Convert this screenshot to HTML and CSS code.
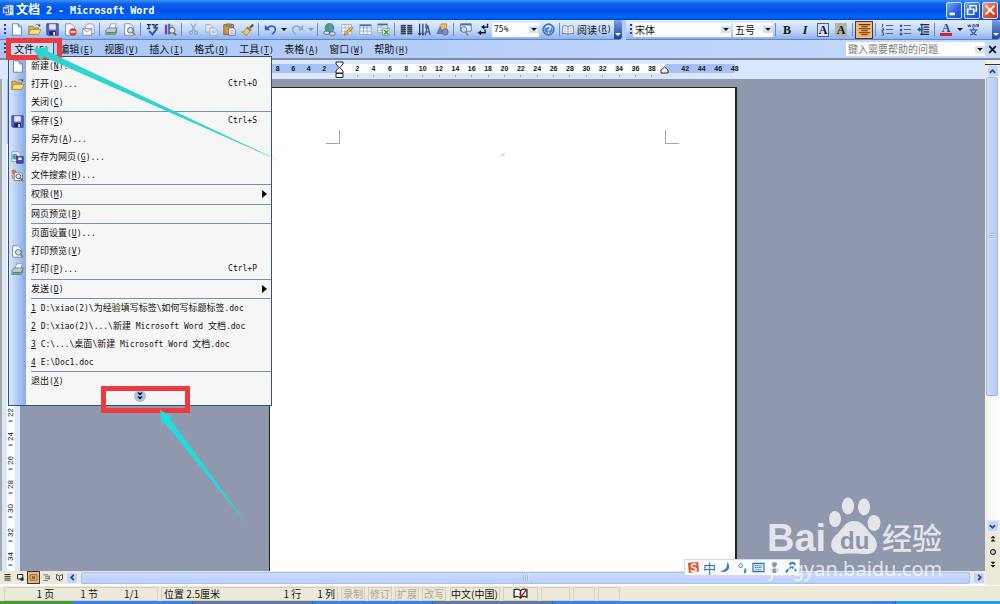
FILE: index.html
```html
<!DOCTYPE html>
<html lang="zh-CN">
<head>
<meta charset="utf-8">
<title>文档 2 - Microsoft Word</title>
<link rel="stylesheet" href="styles.css">
</head>
<body>
<svg class="defs" aria-hidden="true">
  <defs>
    <symbol id="i-new" viewBox="0 0 16 16"><path d="M3 1h7l4 4v10H3z" fill="#fff" stroke="#5a6a94"/><path d="M10 1v4h4z" fill="#b9c9ea" stroke="#5a6a94" stroke-width=".7"/></symbol>
    <symbol id="i-open" viewBox="0 0 16 16"><path d="M1 4h5l1 2h6v8H1z" fill="#e9b13c" stroke="#8a6416" stroke-width=".8"/><path d="M3 8h13l-3 6H1z" fill="#ffdf80" stroke="#9c741c" stroke-width=".8"/><path d="M9 3c2-2 4-2 5 1" fill="none" stroke="#555"/><path d="M12 3l3 2V1z" fill="#555"/></symbol>
    <symbol id="i-save" viewBox="0 0 16 16"><path d="M1 1h14v14H2l-1-1z" fill="#5a62c8" stroke="#2e358c"/><path d="M4 1.500h8V8H4z" fill="#e6ebfb"/><path d="M4 10h8v5H4z" fill="#1e246b"/><path d="M9 11h2v4H9z" fill="#fff"/></symbol>
    <symbol id="i-perm" viewBox="0 0 16 16"><path d="M2 1h7l4 4v10H2z" fill="#fff" stroke="#6b7794"/><circle cx="11" cy="11" r="4.500" fill="#d8402c"/><path d="M8 10h6v2H8z" fill="#fff"/></symbol>
    <symbol id="i-mail" viewBox="0 0 16 16"><path d="M4 7V4l3-3h6l2 3v9h-3" fill="#f4f6fb" stroke="#8790a8"/><path d="M1 7h11v8H1z" fill="#fff" stroke="#6f7892"/><path d="M1 7l5.500 4L12 7" fill="none" stroke="#6f7892"/></symbol>
    <symbol id="i-print" viewBox="0 0 16 16"><path d="M5 7l2-6h7l-2 6z" fill="#fff" stroke="#6b7794" stroke-width=".8"/><path d="M1 9l3-3h11l-2 4v4H1z" fill="#c5cad2" stroke="#515966" stroke-width=".8"/><path d="M2 11h10v2H2z" fill="#2f9e48"/><path d="M13 10l2-3v4l-2 3z" fill="#7a828f"/></symbol>
    <symbol id="i-preview" viewBox="0 0 16 16"><path d="M2 1h7l4 4v10H2z" fill="#fff" stroke="#6b7794"/><circle cx="9" cy="9" r="3.500" fill="#c9e2f8" stroke="#444f66"/><path d="M11.500 11.500L15 15" stroke="#b47a38" stroke-width="2"/></symbol>
    <symbol id="i-spell" viewBox="0 0 16 16"><path d="M1 2h5M3.500 2v5M7 2h3v5M12 2h3M12 2v4h3M1 7h4" fill="none" stroke="#222c4e" stroke-width="1.500"/><path d="M4 10l4 4 6-8" fill="none" stroke="#2559c4" stroke-width="2.500"/></symbol>
    <symbol id="i-research" viewBox="0 0 16 16"><path d="M1 2h3v12H1z" fill="#8d3e95"/><path d="M5 1h3v13H5z" fill="#4670be"/><path d="M9 2h3v12H9z" fill="#ddb13a"/><circle cx="10" cy="9" r="3.500" fill="#d9ebfb" stroke="#3f4b6a"/><path d="M12 12l3 3" stroke="#84571f" stroke-width="2"/></symbol>
    <symbol id="i-cut" viewBox="0 0 16 16"><path d="M5 1l5 9M11 1L6 10" stroke="#93a2c0" stroke-width="1.500"/><circle cx="5" cy="12" r="2" fill="none" stroke="#93a2c0" stroke-width="1.500"/><circle cx="11" cy="12" r="2" fill="none" stroke="#93a2c0" stroke-width="1.500"/></symbol>
    <symbol id="i-copy" viewBox="0 0 16 16"><path d="M1 2h6l2 2v7H1z" fill="#e4eaf5" stroke="#97a5c1"/><path d="M6 6h6l3 3v6H6z" fill="#e4eaf5" stroke="#97a5c1"/><path d="M8 10h5M8 12h5" stroke="#97a5c1"/></symbol>
    <symbol id="i-paste" viewBox="0 0 16 16"><path d="M1 2h12v12H1z" fill="#d99a30" stroke="#7a5313"/><path d="M4 1h6v3H4z" fill="#8f98a8" stroke="#555" stroke-width=".6"/><path d="M7 6h6l2 2v7H7z" fill="#fff" stroke="#445c98"/><path d="M9 9h4M9 11h4M9 13h4" stroke="#6881ba" stroke-width=".8"/></symbol>
    <symbol id="i-brush" viewBox="0 0 16 16"><path d="M10 5l4-4 2 2-4 4z" fill="#785023"/><path d="M8 4l5 5-2 1-4-4z" fill="#6f7b93"/><path d="M7 6l4 4-4 5-6-4c3 0 4-2 6-5z" fill="#f4cf4d" stroke="#8d6b17" stroke-width=".8"/></symbol>
    <symbol id="i-undo" viewBox="0 0 16 16"><path d="M4 6c5-4 10-2 10 2 0 3-2 4-4 6" fill="none" stroke="currentColor" stroke-width="2"/><path d="M1 2v7h7z" fill="currentColor"/></symbol>
    <symbol id="i-redo" viewBox="0 0 16 16"><path d="M12 6C7 2 2 4 2 8c0 3 2 4 4 6" fill="none" stroke="currentColor" stroke-width="2"/><path d="M15 2v7H8z" fill="currentColor"/></symbol>
    <symbol id="i-link" viewBox="0 0 16 16"><circle cx="8" cy="6" r="5.500" fill="#4f94d6" stroke="#2a5a8c" stroke-width=".7"/><path d="M4 3c3-3 5-1 4 1s3 3 0 6c-2 0-2-3-4-3zM10 3l3 2-2 3z" fill="#4aa650"/><rect x="1" y="10" width="7" height="4" rx="2" fill="#dde3ea" stroke="#4a5364"/><rect x="8" y="11" width="7" height="4" rx="2" fill="#dde3ea" stroke="#4a5364"/></symbol>
    <symbol id="i-tabdraw" viewBox="0 0 16 16"><path d="M1 2h12v12H1zM1 6h12M1 10h12M5 2v12M9 2v12" fill="#fff" stroke="#8796b7" stroke-width=".8"/><path d="M5 12l8-8 2 2-8 8-3 1z" fill="#f0b73a" stroke="#784c1c" stroke-width=".7"/></symbol>
    <symbol id="i-table" viewBox="0 0 16 16"><path d="M1 2h14v12H1zM1 6h14M1 10h14M5.500 2v12M10 2v12" fill="#fff" stroke="#6e8fc4" stroke-width=".8"/><path d="M1 2h14v2H1z" fill="#3c68b4"/></symbol>
    <symbol id="i-excel" viewBox="0 0 16 16"><path d="M1 1h12v11H1zM1 5h12M1 9h12M5 1v11" fill="#fff" stroke="#6e8fc4" stroke-width=".8"/><path d="M1 1h12v2H1z" fill="#3c68b4"/><path d="M7 7h9v8H7z" fill="#e8f6e4" stroke="#38803a" stroke-width=".8"/><path d="M9 9l5 5M14 9l-5 5" stroke="#2f8e35" stroke-width="1.700"/></symbol>
    <symbol id="i-cols" viewBox="0 0 16 16"><path d="M1 2h6v12H1zM9 2h6v12H9z" fill="#6b7080"/><path d="M1 3h6M1 5.500h6M1 8h6M1 10.500h6M1 13h6M9 3h6M9 5.500h6M9 8h6M9 10.500h6M9 13h6" stroke="#333b50" stroke-width="1.300"/></symbol>
    <symbol id="i-dir" viewBox="0 0 16 16"><path d="M2 1v14M6 1v14M10 1v6" stroke="#2c3650" stroke-width="1.500"/><path d="M0 12l2 3 2-3M4 12l2 3 2-3" fill="none" stroke="#2c3650"/><path d="M9 15l3-12 3 12M10 11h4" fill="none" stroke="#31549f" stroke-width="1.500"/></symbol>
    <symbol id="i-draw" viewBox="0 0 16 16"><path d="M5 3l2-2h6v6l-2 2H5z" fill="#e8c258" stroke="#8a6820" stroke-width=".7"/><path d="M1 13l4-8 4 8z" fill="#6c82c8" stroke="#38478c" stroke-width=".7"/><ellipse cx="11.500" cy="11" rx="3.500" ry="4" fill="#8f87c8" stroke="#4b4484" stroke-width=".7"/></symbol>
    <symbol id="i-map" viewBox="0 0 16 16"><path d="M2 1h13v9H2z" fill="#e7f1fd" stroke="#4468a8"/><path d="M2 1h13v2H2z" fill="#4772bd"/><circle cx="6" cy="8" r="3.500" fill="#c7e8ef" stroke="#3f6b78"/><path d="M8 11l3 4" stroke="#a97632" stroke-width="2"/></symbol>
    <symbol id="i-marks" viewBox="0 0 16 16"><path d="M13 1v4H7M10 8v4H4" fill="none" stroke="#111" stroke-width="1.600"/><path d="M5 5l4-3v6zM1 12l4-3v6z" fill="#111"/></symbol>
    <symbol id="i-help" viewBox="0 0 16 16"><circle cx="8" cy="8" r="7" fill="#4d84d6" stroke="#2b559c"/><circle cx="8" cy="8" r="5" fill="none" stroke="#b9d3f7" stroke-width=".7"/><path d="M5.500 6c0-3 5-3 5 0 0 2-2.500 1.500-2.500 4M8 11.500v1.500" fill="none" stroke="#fff" stroke-width="1.600"/></symbol>
    <symbol id="i-book" viewBox="0 0 16 16"><path d="M8 4C6 2 3 2 1 3v10c2-1 5-1 7 1 2-2 5-2 7-1V3c-2-1-5-1-7 1zM8 4v10" fill="#fff" stroke="#525f7c"/><path d="M3 6h3M3 8h3M3 10h3M10 6h3M10 8h3M10 10h3" stroke="#8d99b4" stroke-width=".8"/></symbol>
    <symbol id="i-center" viewBox="0 0 16 16"><path d="M1 2h14M4 4.500h8M1 7h14M4 9.500h8M1 12h14M4 14.500h8" stroke="#4a3520" stroke-width="1.300"/></symbol>
    <symbol id="i-num" viewBox="0 0 16 16"><path d="M2 1v4M1 7h2v2H1v1h2M1 12h2v3H1" fill="none" stroke="#2b4f9d" stroke-width="1.200"/><path d="M6 3h9M6 8h9M6 13h9" stroke="#5d6678" stroke-width="1.300"/></symbol>
    <symbol id="i-bul" viewBox="0 0 16 16"><path d="M1 2h3v3H1zM1 7h3v3H1zM1 12h3v3H1z" fill="#31559f"/><path d="M6 3h9M6 8h9M6 13h9" stroke="#5d6678" stroke-width="1.300"/></symbol>
    <symbol id="i-indent" viewBox="0 0 16 16"><path d="M4 2h11M8 5h7M8 8h7M8 11h7M4 14h11M6 1v14" stroke="#222b40" stroke-width="1.400"/><path d="M0 8l4-3v6z" fill="#2750a7"/><path d="M3 8h5" stroke="#2750a7" stroke-width="2"/></symbol>
    <symbol id="i-pinyin" viewBox="0 0 16 16"><path d="M1 2l1 3 1-3 1 3 1-3M7 2h2v3H7V3M11 5V2h2v3M14 1v4" fill="none" stroke="#2e3b5c"/><path d="M8 6v2M3 8.500h10M5 9c1 3 4 5 7 6M11 9c-1 3-4 5-7 6" fill="none" stroke="#2f5cb0" stroke-width="1.500"/></symbol>
    <symbol id="i-websave" viewBox="0 0 16 16"><path d="M1 1h8l2 2v10H1z" fill="#fff" stroke="#7787a8"/><circle cx="5" cy="7" r="3.500" fill="#4b9ccb"/><path d="M3 6l3-1v4z" fill="#5bb35a"/><path d="M7 7h8v8H7z" fill="#4850b0" stroke="#272d78"/><path d="M9 8h4v3H9z" fill="#fff"/></symbol>
    <symbol id="i-search" viewBox="0 0 16 16"><path d="M1 1h5v5H1z" fill="#e07632"/><path d="M4 4h7l3 3v7H4z" fill="#fff" stroke="#5a6a94"/><path d="M1 8h2M2 7v5" stroke="#c69b2a" stroke-width="2"/><circle cx="9" cy="9" r="3" fill="#cfe4f6" stroke="#3f4d70"/><path d="M11 11l4 4" stroke="#a8682c" stroke-width="2"/></symbol>
    <symbol id="i-left" viewBox="0 0 10 10"><path d="M6.500 2L3.500 5l3 3" fill="none" stroke="#2b4687" stroke-width="2"/></symbol>
    <symbol id="i-right" viewBox="0 0 10 10"><path d="M3.500 2l3 3-3 3" fill="none" stroke="#2b4687" stroke-width="2"/></symbol>
    <symbol id="i-up" viewBox="0 0 10 10"><path d="M2 6.500l3-3 3 3" fill="none" stroke="#2b4687" stroke-width="2"/></symbol>
    <symbol id="i-down" viewBox="0 0 10 10"><path d="M2 3.500l3 3 3-3" fill="none" stroke="#2b4687" stroke-width="2"/></symbol>
  </defs>
</svg>

<header class="titlebar">
  <svg class="app-icon" viewBox="0 0 16 16"><path d="M5 1h10v13H5z" fill="#fff" stroke="#91a7d6"/><path d="M8 4h6M8 6h6M10 8h4M10 10h4" stroke="#7b93c4"/><path d="M1 3h9v9H1z" fill="#dfe8fb" stroke="#3a5fb0"/><path d="M3 5l1 5 1.500-4L7 10l1-5" fill="none" stroke="#2450a8" stroke-width="1.400"/></svg>
  <h1 class="title">文档<span class="latin-title"> 2 - Microsoft Word</span></h1>
  <button class="win" aria-label="最小化"><svg viewBox="0 0 16 16"><path d="M3 11h6v3H3z" fill="#fff"/></svg></button>
  <button class="win" aria-label="还原"><svg viewBox="0 0 16 16"><path d="M6 6V3h7v6h-3M3 7h7v6H3z" fill="none" stroke="#fff" stroke-width="1.700"/></svg></button>
  <button class="win close" aria-label="关闭"><svg viewBox="0 0 16 16"><path d="M3 3l10 10M13 3L3 13" stroke="#fff" stroke-width="2.400"/></svg></button>
</header>

<div class="toolbars">
  <div class="toolbar standard" role="toolbar" aria-label="常用">
    <span class="grip"></span>
    <button class="tool" aria-label="新建"><svg><use href="#i-new"/></svg></button>
    <button class="tool" aria-label="打开"><svg><use href="#i-open"/></svg></button>
    <button class="tool" aria-label="保存"><svg><use href="#i-save"/></svg></button>
    <button class="tool" aria-label="权限"><svg><use href="#i-perm"/></svg></button>
    <button class="tool" aria-label="电子邮件"><svg><use href="#i-mail"/></svg></button>
    <span class="sep"></span>
    <button class="tool" aria-label="打印"><svg><use href="#i-print"/></svg></button>
    <button class="tool" aria-label="打印预览"><svg><use href="#i-preview"/></svg></button>
    <span class="sep"></span>
    <button class="tool" aria-label="拼写"><svg><use href="#i-spell"/></svg></button>
    <button class="tool" aria-label="信息检索"><svg><use href="#i-research"/></svg></button>
    <span class="sep"></span>
    <button class="tool" aria-label="剪切"><svg><use href="#i-cut"/></svg></button>
    <button class="tool" aria-label="复制"><svg><use href="#i-copy"/></svg></button>
    <button class="tool" aria-label="粘贴"><svg><use href="#i-paste"/></svg></button>
    <button class="tool" aria-label="格式刷"><svg><use href="#i-brush"/></svg></button>
    <span class="sep"></span>
    <button class="tool undo" aria-label="撤消"><svg><use href="#i-undo"/></svg></button>
    <button class="drop" aria-label="撤消列表"></button>
    <button class="tool redo" aria-label="恢复"><svg><use href="#i-redo"/></svg></button>
    <button class="drop dim" aria-label="恢复列表"></button>
    <span class="sep"></span>
    <button class="tool" aria-label="超链接"><svg><use href="#i-link"/></svg></button>
    <button class="tool" aria-label="表格和边框"><svg><use href="#i-tabdraw"/></svg></button>
    <button class="tool" aria-label="插入表格"><svg><use href="#i-table"/></svg></button>
    <button class="tool" aria-label="插入工作表"><svg><use href="#i-excel"/></svg></button>
    <span class="sep"></span>
    <button class="tool" aria-label="分栏"><svg><use href="#i-cols"/></svg></button>
    <button class="tool" aria-label="文字方向"><svg><use href="#i-dir"/></svg></button>
    <button class="tool" aria-label="绘图"><svg><use href="#i-draw"/></svg></button>
    <span class="sep"></span>
    <button class="tool" aria-label="文档结构图"><svg><use href="#i-map"/></svg></button>
    <button class="tool" aria-label="显示标记"><svg><use href="#i-marks"/></svg></button>
    <span class="combo zoom-box"><select class="mono" aria-label="显示比例"><option>75%</option></select></span>
    <button class="tool" aria-label="帮助"><svg><use href="#i-help"/></svg></button>
    <span class="sep"></span>
    <button class="read"><svg><use href="#i-book"/></svg>阅读<span class="mono">(<u>R</u>)</span></button>
    <button class="tail" aria-label="工具栏选项"></button>
  </div>
  <div class="toolbar format" role="toolbar" aria-label="格式">
    <span class="grip"></span>
    <span class="combo font-box"><select aria-label="字体"><option>宋体</option></select></span>
    <span class="combo size-box"><select aria-label="字号"><option>五号</option></select></span>
    <span class="sep"></span>
    <button class="tool letter">B</button>
    <button class="tool letter italic">I</button>
    <button class="tool letter"><span class="boxed">A</span></button>
    <button class="tool letter"><span class="shaded">A</span></button>
    <span class="sep"></span>
    <button class="tool pressed" aria-label="居中"><svg><use href="#i-center"/></svg></button>
    <span class="sep"></span>
    <button class="tool" aria-label="编号"><svg><use href="#i-num"/></svg></button>
    <button class="tool" aria-label="项目符号"><svg><use href="#i-bul"/></svg></button>
    <button class="tool" aria-label="减少缩进"><svg><use href="#i-indent"/></svg></button>
    <span class="sep"></span>
    <button class="tool letter color"><span class="font-color">A</span></button>
    <button class="drop" aria-label="字体颜色列表"></button>
    <button class="tool" aria-label="拼音指南"><svg><use href="#i-pinyin"/></svg></button>
    <button class="tail" aria-label="工具栏选项"></button>
  </div>
</div>

<nav class="menubar">
  <span class="grip"></span>
  <button class="menu active">文件<span class="mono">(<u>F</u>)</span></button>
  <button class="menu">编辑<span class="mono">(<u>E</u>)</span></button>
  <button class="menu">视图<span class="mono">(<u>V</u>)</span></button>
  <button class="menu">插入<span class="mono">(<u>I</u>)</span></button>
  <button class="menu">格式<span class="mono">(<u>O</u>)</span></button>
  <button class="menu">工具<span class="mono">(<u>T</u>)</span></button>
  <button class="menu">表格<span class="mono">(<u>A</u>)</span></button>
  <button class="menu">窗口<span class="mono">(<u>W</u>)</span></button>
  <button class="menu">帮助<span class="mono">(<u>H</u>)</span></button>
  <span class="ask combo"><input type="text" aria-label="帮助" placeholder="键入需要帮助的问题"></span>
  <button class="close-doc" aria-label="关闭窗口"><svg viewBox="0 0 10 10"><path d="M2 2l6 6M8 2L2 8" stroke="#111" stroke-width="1.600"/></svg></button>
</nav>

<div class="work">
  <div class="doc">
    <div class="ruler">
      <div class="scale">
        <div class="before"><span>8</span><span>6</span><span>4</span><span>2</span></div>
        <div class="inside">
          <svg class="marker hourglass" viewBox="0 0 9 18"><path d="M1 1h7v2L5 6.500 8 10v2H1v-2l3-3.500L1 3z" fill="#fff" stroke="#222"/><path d="M1 12.500h7v4H1z" fill="#fff" stroke="#222"/></svg>
          <span>2</span><span>4</span><span>6</span><span>8</span><span>10</span><span>12</span><span>14</span><span>16</span><span>18</span><span>20</span><span>22</span><span>24</span><span>26</span><span>28</span><span>30</span><span>32</span><span>34</span><span>36</span><span>38</span>
          <svg class="marker right" viewBox="0 0 9 8"><path d="M1 7V4l3.500-3L8 4v3z" fill="#fff" stroke="#222"/></svg>
        </div>
        <div class="after"><span>42</span><span>44</span><span>46</span><span>48</span></div>
      </div>
    </div>
    <div class="stage">
      <div class="vruler"><div class="vscale"><span>22</span><span>24</span><span>26</span><span>28</span><span>30</span><span>32</span><span>34</span></div></div>
      <main class="canvas">
        <article class="page">
          <div class="corners"><i class="corner"></i><i class="corner flip"></i></div>
          <div class="para">,↲</div>
        </article>
      </main>
    </div>
    <div class="hbar">
      <button class="view" aria-label="普通视图"><svg viewBox="0 0 12 12"><path d="M2 2h8M2 4.500h8M2 7h8M2 9.500h8" stroke="#222" stroke-width="1.200"/></svg></button>
      <button class="view" aria-label="Web 版式视图"><svg viewBox="0 0 12 12"><path d="M2 2h7v6H2z" fill="#fff" stroke="#222" stroke-width="1.300"/><circle cx="8" cy="8" r="2.500" fill="#333"/></svg></button>
      <button class="view on" aria-label="页面视图"><svg viewBox="0 0 12 12"><path d="M1.500 2.500h9v7h-9z" fill="#ffe0b0" stroke="#5c3a1c"/><path d="M3.500 4.500h5M3.500 6h5M3.500 7.500h5" stroke="#5c3a1c"/></svg></button>
      <button class="view" aria-label="大纲视图"><svg viewBox="0 0 12 12"><path d="M2 2.500h6M4 5h6M4 7.500h6M2 10h6M9.500 3v6" fill="none" stroke="#555"/></svg></button>
      <button class="view" aria-label="阅读版式"><svg viewBox="0 0 12 12"><path d="M6 4L2 2v6l4 2 4-2V2zM6 4v6" fill="#fff" stroke="#222"/></svg></button>
      <button class="arrow" aria-label="向左"><svg><use href="#i-left"/></svg></button>
      <div class="hthumb"><i class="knurl"></i></div>
      <button class="arrow" aria-label="向右"><svg><use href="#i-right"/></svg></button>
    </div>
  </div>
  <div class="vbar">
    <i class="split"></i>
    <button class="arrow" aria-label="向上"><svg><use href="#i-up"/></svg></button>
    <div class="vtrack"><div class="vthumb"><i class="knurl"></i></div></div>
    <button class="arrow" aria-label="向下"><svg><use href="#i-down"/></svg></button>
    <button class="browse" aria-label="前一页"><svg viewBox="0 0 10 10"><path d="M2 4l3-3 3 3zM2 8l3-3 3 3z" fill="#111"/></svg></button>
    <button class="browse" aria-label="选择浏览对象"><svg viewBox="0 0 10 10"><circle cx="5" cy="5" r="3" fill="#ccc" stroke="#222" stroke-width="1.300"/></svg></button>
    <button class="browse" aria-label="下一页"><svg viewBox="0 0 10 10"><path d="M2 1l3 3 3-3zM2 5l3 3 3-3z" fill="#111"/></svg></button>
  </div>
</div>

<footer class="status">
  <div class="cell pages"><span>1 页</span><span>1 节</span><span>1/1</span></div>
  <div class="cell pos"><span>位置 2.5厘米</span><span class="line">1 行</span><span>1 列</span></div>
  <div class="cell off">录制</div>
  <div class="cell off">修订</div>
  <div class="cell off">扩展</div>
  <div class="cell off">改写</div>
  <div class="cell lang">中文(中国)</div>
  <div class="cell book"><svg viewBox="0 0 16 12"><path d="M8 3C6 1 3 1 1 2v8c2-1 5-1 7 1 2-2 5-2 7-1V2c-2-1-5-1-7 1zM8 3v8" fill="#fff" stroke="#222" stroke-width="1.400"/><path d="M7 6l2 3 6-8" fill="none" stroke="#b3202c" stroke-width="1.600"/></svg></div>
  <div class="cell blank"></div>
  <div class="cell blank small"></div>
  <div class="cell blank small"></div>
</footer>
<div class="taskbar"><i class="start"></i><i class="task"></i><i class="task dull"></i><i class="task"></i><i class="task dull"></i><i class="task wide"></i><i class="tray"></i></div>

<div class="file-menu" role="menu">
  <button class="item"><svg><use href="#i-new"/></svg><span>新建<span class="mono">(<u>N</u>)...</span></span></button>
  <button class="item"><svg><use href="#i-open"/></svg><span>打开<span class="mono">(<u>O</u>)...</span></span><kbd>Ctrl+O</kbd></button>
  <button class="item"><span>关闭<span class="mono">(<u>C</u>)</span></span></button>
  <hr>
  <button class="item"><svg><use href="#i-save"/></svg><span>保存<span class="mono">(<u>S</u>)</span></span><kbd>Ctrl+S</kbd></button>
  <button class="item"><span>另存为<span class="mono">(<u>A</u>)...</span></span></button>
  <button class="item"><svg><use href="#i-websave"/></svg><span>另存为网页<span class="mono">(<u>G</u>)...</span></span></button>
  <button class="item"><svg><use href="#i-search"/></svg><span>文件搜索<span class="mono">(<u>H</u>)...</span></span></button>
  <hr>
  <button class="item sub"><span>权限<span class="mono">(<u>M</u>)</span></span></button>
  <hr class="roomy">
  <button class="item"><span>网页预览<span class="mono">(<u>B</u>)</span></span></button>
  <hr>
  <button class="item"><span>页面设置<span class="mono">(<u>U</u>)...</span></span></button>
  <button class="item"><svg><use href="#i-preview"/></svg><span>打印预览<span class="mono">(<u>V</u>)</span></span></button>
  <button class="item"><svg><use href="#i-print"/></svg><span>打印<span class="mono">(<u>P</u>)...</span></span><kbd>Ctrl+P</kbd></button>
  <hr class="roomy">
  <button class="item sub"><span>发送<span class="mono">(<u>D</u>)</span></span></button>
  <hr>
  <button class="item"><span><span class="mono"><u>1</u> D:\xiao(2)\</span>为经验填写标签<span class="mono">\</span>如何写标题标签<span class="mono">.doc</span></span></button>
  <button class="item"><span><span class="mono"><u>2</u> D:\xiao(2)\...\</span>新建<span class="mono"> Microsoft Word </span>文档<span class="mono">.doc</span></span></button>
  <button class="item"><span><span class="mono"><u>3</u> C:\...\</span>桌面<span class="mono">\</span>新建<span class="mono"> Microsoft Word </span>文档<span class="mono">.doc</span></span></button>
  <button class="item"><span><span class="mono"><u>4</u> E:\Doc1.doc</span></span></button>
  <hr>
  <button class="item"><span>退出<span class="mono">(<u>X</u>)</span></span></button>
  <button class="more" aria-label="展开"><svg viewBox="0 0 12 12"><circle cx="6" cy="6" r="6" fill="#a9c3ee"/><path d="M4 2.500l2 2 2-2M4 6.500l2 2 2-2" fill="none" stroke="#111" stroke-width="1.400"/></svg></button>
</div>

<div class="ime">
  <svg class="ime-logo" viewBox="0 0 14 14"><path d="M1 2l11-1 1 10-11 2z" fill="#e1572a"/><path d="M10 4C7 2.500 4 4 5 6s5 .5 5 3-4 2.500-6 1" fill="none" stroke="#fff" stroke-width="1.600"/></svg>
  <span>中</span>
  <svg viewBox="0 0 14 14"><path d="M9 1c5 6 0 13-8 10 5 0 8-4 8-10z" fill="#2b84c8"/></svg>
  <svg viewBox="0 0 14 14"><circle cx="5" cy="5" r="2" fill="none" stroke="#2b84c8"/><path d="M10 8v3l-1 2" fill="none" stroke="#2b84c8" stroke-width="2"/></svg>
  <svg viewBox="0 0 14 14"><path d="M1 2.500h12v9H1z" fill="#d6eaf8" stroke="#2b74b8" stroke-width="1.200"/><path d="M3 5h8M3 7h8M4 9.500h6" stroke="#2b74b8" stroke-dasharray="1.400 .6"/></svg>
  <svg viewBox="0 0 14 14"><circle cx="7" cy="4" r="3" fill="#8a98a8"/><path d="M3 8h8v4l-2 1H5l-2-1z" fill="#8a98a8"/></svg>
  <svg viewBox="0 0 14 14"><path d="M2 12l6-6M6 4c2-3 5-2 6 0M9 6l4 5" fill="none" stroke="#2b84c8" stroke-width="2.400"/></svg>
</div>

<svg class="watermark" viewBox="0 0 190 96" aria-label="Baidu 经验">
  <g fill="#fff" fill-opacity=".75">
    <text class="wm-bai" x="7" y="61">Bai</text>
    <ellipse cx="75" cy="29" rx="6" ry="8"/><ellipse cx="88" cy="16" rx="6" ry="8.500"/><ellipse cx="104" cy="17" rx="6" ry="8.500"/><ellipse cx="114" cy="33" rx="6.500" ry="8"/>
    <path d="M94 31c9 0 12 8 18 14 8 7 6 19-5 19-8 0-17-1-25 0-12 0-14-12-6-19 7-6 9-14 18-14z"/>
    <text class="wm-cn" x="122" y="59">经验</text>
    <text class="wm-url" x="9" y="86">jingyan.baidu.com</text>
  </g>
  <text class="wm-du" x="80" y="59">du</text>
</svg>

<svg class="annotations" viewBox="0 0 300 540" aria-hidden="true">
  <path d="M8.500 40.500h51v17h-51zM103.500 388.500h84v22h-84z" fill="none" stroke="#ee3a3c" stroke-width="5"/>
  <path d="M33 49l16-2-2 4 235 111L44 57l-3 4z" fill="#2dd4d0"/>
  <path d="M160 410l13 7-3 2 79 108-84-104-3 2z" fill="#1fdcdc"/>
</svg>
</body>
</html>
```
FILE: styles.css
```css
* { box-sizing: border-box; }

body {
  margin: 0;
  min-height: 100vh;
  display: flex;
  flex-direction: column;
  position: relative;
  overflow: hidden;
  background: #ece9d8;
  color: #111;
  font: 10px/16px "Noto Sans CJK SC", sans-serif;
}

button, input, select { font: inherit; color: inherit; margin: 0; padding: 0; border: 0; background: none; border-radius: 0; }
svg { display: block; }
.defs { position: absolute; width: 0; height: 0; }
.mono, kbd { font-family: "DejaVu Sans Mono", monospace; font-size: 8px; white-space: pre; }
u { text-underline-offset: 1px; }

/* Title bar */
.titlebar {
  height: 20px;
  display: flex;
  align-items: center;
  gap: 2px;
  padding: 0 2px;
  background: linear-gradient(#3a94ff, #0a5fee 20%, #0054e3 55%, #0066ff 88%, #0040c0);
  color: #fff;
}
.app-icon { width: 12px; height: 13px; }
.title { flex: 1; margin: 0; font-size: 12px; line-height: 18px; font-weight: 700; }
.latin-title { font-family: "DejaVu Sans Mono", monospace; font-size: 10px; white-space: pre; }
.win { width: 16px; height: 17px; border: 1px solid #cfe0ff; border-radius: 2px; background: linear-gradient(135deg, #7fa8f8, #2a5fdc 60%, #1c4fc8); }
.win svg { width: 14px; height: 14px; }
.win.close { background: linear-gradient(135deg, #f0a080, #e0522c 60%, #c83c14); }

/* Toolbars */
.toolbars { display: flex; gap: 4px; height: 20px; background: #b4cdf8; }
.toolbar { display: flex; align-items: center; height: 20px; background: linear-gradient(#e2eefe, #c5dafb 50%, #8fb3ee); border-bottom: 1px solid #5f86cc; border-radius: 0 3px 3px 0; }
.format { flex: 1; }
.grip { flex: none; width: 3px; height: 12px; margin: 0 0 0 4px; background: repeating-linear-gradient(#27418c 0 2px, transparent 2px 4px); background-clip: content-box; padding-right: 1px; }
.tool { flex: none; width: 18px; height: 18px; display: flex; align-items: center; justify-content: center; }
.tool svg { width: 13px; height: 13px; }
.sep { flex: none; width: 1px; height: 13px; margin: 0 2px; background: #6a8ccb; }
.undo { color: #2f62c8; }
.redo { color: #98aacb; }
.drop { width: 9px; height: 18px; display: flex; align-items: center; justify-content: center; }
.drop::before { content: ""; border: 3px solid transparent; border-top-color: #111; border-bottom: 0; }
.drop.dim::before { border-top-color: #7f93b8; }
.combo { display: flex; align-items: center; height: 14px; background: #fff; }
.combo::after { content: ""; flex: none; border: 3px solid transparent; border-top-color: #111; border-bottom: 0; margin: 0 2px; outline: 2px solid #cfe0fb; }
.combo select { appearance: none; flex: 1; min-width: 0; padding-left: 2px; line-height: 14px; height: 14px; }
.zoom-box { width: 47px; }
.font-box { width: 98px; margin-right: 2px; }
.size-box { width: 40px; }
.read { display: flex; align-items: center; gap: 3px; width: 50px; line-height: 18px; white-space: nowrap; }
.read svg { width: 12px; height: 12px; flex: none; }
.read .mono { margin-left: -3px; }
.tail { align-self: stretch; width: 8px; margin-left: 2px; background: linear-gradient(#7aa0e6, #1c429c); border-radius: 0 3px 3px 0; display: flex; align-items: flex-end; justify-content: center; padding-bottom: 3px; }
.tail::before { content: ""; border: 3px solid transparent; border-top-color: #fff; border-bottom: 0; }
.format .tail { margin-left: auto; }
.letter { font: 700 12px/14px "Liberation Serif", serif; }
.italic { font-style: italic; }
.boxed, .shaded { width: 12px; line-height: 12px; border: 1px solid #4a628f; text-align: center; background: #d4e3fb; }
.shaded { background: #b3b3ad; border-color: #b3b3ad; }
.font-color { border-bottom: 3px solid #d2202c; width: 12px; line-height: 10px; color: #2a4a94; }
.pressed { background: #fdb866; border: 1px solid #283a78; }

/* Menu bar */
.menubar { display: flex; align-items: center; height: 20px; background: linear-gradient(90deg, #a9c6f6, #c6dafa); border-bottom: 2px solid #7f8aa2; }
.menu { width: 45px; height: 16px; line-height: 14px; white-space: nowrap; border: 1px solid transparent; }
.menu.active { margin-left: 2px; background: #c9dcfb; border-color: #35548f; border-bottom: 0; }
.ask { margin-left: auto; width: 139px; }
.ask input { flex: 1; min-width: 0; line-height: 14px; padding-left: 2px; }
.ask input::placeholder { color: #777; opacity: 1; }
.close-doc { width: 15px; display: flex; justify-content: center; }
.close-doc svg { width: 11px; height: 11px; }

/* Work area */
.work { flex: 1; display: flex; }
.doc { flex: 1; min-width: 0; display: flex; flex-direction: column; }
.ruler { height: 19px; padding: 4px 0 0 20px; background: #d9e7fc; }
.scale { max-width: 465px; margin: 0 auto; display: flex; height: 9px; font: 700 7px/9px "Liberation Sans", sans-serif; text-align: center; }
.before, .after { flex: none; display: grid; grid-auto-flow: column; grid-auto-columns: 1fr; }
.before { width: 70px; padding-right: 8px; background: #a6c1f3; }
.after { width: 78px; margin-right: -8px; padding-left: 12px; background: linear-gradient(90deg, #a6c1f3 70px, transparent 70px); }
.inside { flex: 1; position: relative; display: grid; grid-auto-flow: column; grid-auto-columns: 1fr; padding: 0 5px 0 9px; background: #fff; }
.inside span::after { content: ""; display: block; width: 1px; height: 2px; margin: 2px auto 0; background: #8fa0bf; }
.marker { position: absolute; width: 9px; }
.hourglass { left: -5px; top: -3px; height: 18px; }
.right { right: -4px; top: 2px; height: 8px; }
.stage { flex: 1; display: flex; background: #9098ae; }
.vruler { width: 20px; padding: 0 5px; background: #d9e7fc; border-left: 2px solid #a9a9a4; display: flex; }
.vscale { flex: 1; background: linear-gradient(#a6c1f3 65px, #fff 65px); display: flex; flex-direction: column; align-items: center; justify-content: flex-end; padding-bottom: 4px; font: 8px/8px "Liberation Sans", sans-serif; }
.vscale span { writing-mode: vertical-rl; transform: rotate(180deg); height: 24px; display: flex; align-items: center; gap: 2px; }
.vscale span::before { content: ""; width: 1px; height: 4px; background: #333; transform: rotate(90deg); }
.canvas { flex: 1; display: flex; padding-top: 8px; min-width: 0; }
.page { flex: 1; max-width: 468px; margin: 0 auto; background: #fff; border: 1px solid #222; border-right-width: 2px; border-bottom: 0; padding: 42px 56px 0; }
.corners { display: flex; justify-content: space-between; }
.corner { width: 14px; height: 14px; border: solid #a6a6a6; border-width: 0 1px 1px 0; }
.corner.flip { border-width: 0 0 1px 1px; }
.para { text-align: center; color: #999; font-size: 5px; line-height: 20px; }

/* Scroll bars */
.arrow { flex: none; width: 12px; height: 12px; display: flex; align-items: center; justify-content: center; background: #c4d5fb; border: 1px solid #e4edff; border-radius: 2px; }
.arrow svg { width: 9px; height: 9px; }
.hbar { height: 14px; display: flex; align-items: center; padding-left: 1px; border-bottom: 1px solid #fff; }
.view { width: 13px; height: 13px; display: flex; align-items: center; justify-content: center; }
.view svg { width: 9px; height: 9px; }
.view.on { background: #f8b26c; border: 1px solid #2b3564; }
.hthumb { flex: 1; height: 12px; margin: 0 3px; border: 1px solid #a8c0f0; border-radius: 2px; background: linear-gradient(#cbdafd, #bccffb); display: flex; align-items: center; justify-content: center; }
.knurl { width: 6px; height: 6px; background: repeating-linear-gradient(90deg, #9cb5e6 0 1px, #e0eafd 1px 2px); }
.vbar { width: 15px; display: flex; flex-direction: column; align-items: center; background: #ece9d8; }
.split { align-self: stretch; height: 5px; border-bottom: 1px solid #333; background: #f2f0e4; }
.vtrack { flex: 1; align-self: stretch; background: linear-gradient(90deg, #f3f3ec, #fff); padding: 0 2px 0 1px; }
.vthumb { height: 72%; background: linear-gradient(90deg, #cbdafd, #b8cbf9); border: 1px solid #a0b8e8; border-radius: 2px; display: flex; align-items: center; justify-content: center; }
.vthumb .knurl { background: repeating-linear-gradient(#9cb5e6 0 1px, #e0eafd 1px 2px); }
.browse { width: 13px; height: 13px; display: flex; align-items: center; justify-content: center; }
.browse svg { width: 8px; height: 8px; }
.vbar .browse:last-child { margin-bottom: 14px; }

/* Status bar */
.status { height: 16px; display: flex; align-items: center; gap: 3px; padding: 0 4px; border-top: 1px solid #fff; white-space: nowrap; }
.cell { height: 14px; line-height: 12px; padding: 0 2px; border: 1px solid #d2cfbf; }
.pages { width: 154px; display: flex; gap: 26px; padding: 0 18px 0 0; justify-content: flex-end; }
.pos { width: 177px; display: flex; gap: 16px; }
.line { margin-left: auto; }
.off { width: 24px; color: #aaa797; padding: 0 1px; }
.lang { width: 50px; margin-left: 1px; padding: 0; }
.book { width: 35px; display: flex; align-items: center; justify-content: center; }
.book svg { width: 15px; height: 11px; }
.blank { width: 29px; }
.small { width: 22px; }
.taskbar { height: 3px; display: flex; background: #245edb; }
.start { width: 73px; background: #4c9a3e; }
.task { width: 120px; background: #3f80ea; border-right: 1px solid #245edb; }
.dull { background: #61789f; }
.wide { flex: 1; }
.tray { width: 104px; background: #18a0ea; }

/* File menu */
.file-menu {
  position: absolute;
  left: 8px;
  top: 56px;
  width: 264px;
  border: 1px solid #2f4f8f;
  background: linear-gradient(90deg, #dbe8fd, #86abe6 17px, #f6f6f6 17px);
  font-size: 9px;
  display: flex;
  flex-direction: column;
}
.item { display: flex; align-items: center; height: 18px; line-height: 18px; padding: 0 14px 0 22px; text-align: left; white-space: nowrap; }
.item > svg { width: 13px; height: 13px; margin: 0 7px 0 -20px; flex: none; }
.item kbd { margin-left: auto; }
.sub { padding-right: 4px; }
.sub::after { content: ""; margin-left: auto; border: 4px solid transparent; border-left: 5px solid #000; border-right: 0; }
.file-menu hr { width: 240px; height: 1px; margin: 0 0 0 auto; border: 0; background: #6f93b8; }
.file-menu hr.roomy { margin-top: 1px; }
.more { height: 15px; display: flex; justify-content: center; }
.more svg { width: 12px; height: 12px; }

/* Floating layers */
.ime { position: absolute; left: 684px; top: 559px; height: 17px; width: 116px; display: flex; align-items: center; justify-content: space-around; background: #fbfcff; border: 1px solid #d5d9e4; color: #2b74b8; font-size: 13px; }
.ime svg { width: 13px; height: 13px; }
.watermark { position: absolute; left: 760px; top: 490px; width: 190px; height: 96px; }
.wm-bai { font: 700 38px "Liberation Sans", sans-serif; }
.wm-cn { font: 500 30px "Noto Sans CJK SC", sans-serif; }
.wm-url { font: 20px "Noto Sans", sans-serif; }
.wm-du { font: 700 24px "Liberation Sans", sans-serif; fill: #8c94aa; }
.annotations { position: absolute; left: 0; top: 0; width: 300px; height: 540px; pointer-events: none; }
```
